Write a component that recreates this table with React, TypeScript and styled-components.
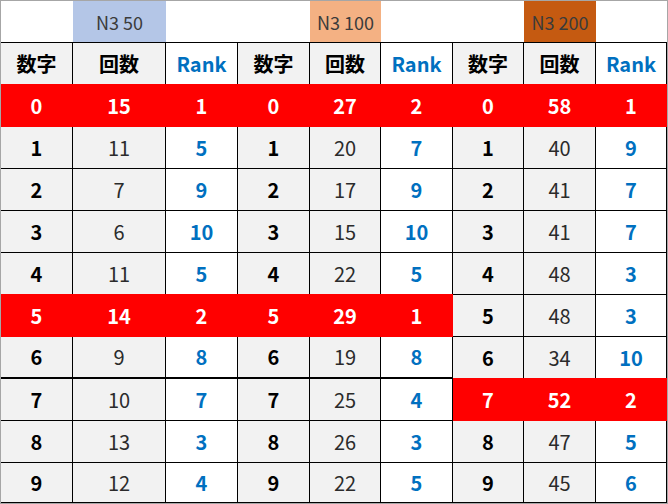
import React from "react";
import styled, { createGlobalStyle, css } from "styled-components";

type Kind = "num" | "count" | "rank";

type Group = {
  title: string;
  tint: string;
  counts: number[];
  ranks: number[];
  hot: number[];
};

const groups: Group[] = [
  {
    title: "N3 50",
    tint: "#b4c6e7",
    counts: [15, 11, 7, 6, 11, 14, 9, 10, 13, 12],
    ranks: [1, 5, 9, 10, 5, 2, 8, 7, 3, 4],
    hot: [0, 5],
  },
  {
    title: "N3 100",
    tint: "#f4b183",
    counts: [27, 20, 17, 15, 22, 29, 19, 25, 26, 22],
    ranks: [2, 7, 9, 10, 5, 1, 8, 4, 3, 5],
    hot: [0, 5],
  },
  {
    title: "N3 200",
    tint: "#c55a11",
    counts: [58, 40, 41, 41, 48, 48, 34, 52, 47, 45],
    ranks: [1, 9, 7, 7, 3, 3, 10, 2, 5, 6],
    hot: [0, 7],
  },
];

const COLUMNS = "72px 93px 72px 72px 71px 72px 71px 72px 71px";

const GlobalStyle = createGlobalStyle`
  body {
    margin: 0;
    background: #fff;
    font-family: "Noto Sans CJK JP", "Noto Sans", sans-serif;
  }
`;

const Frame = styled.div`
  display: flex;
  flex-direction: column;
  width: 668px;
  height: 504px;
  box-sizing: border-box;
  border: 1px solid #a6a6a6;
  overflow: hidden;
`;

const TitleRow = styled.div`
  display: grid;
  grid-template-columns: ${COLUMNS};
  height: 41px;
`;

const TitleCell = styled.div<{ $tint?: string }>`
  display: flex;
  align-items: center;
  justify-content: center;
  padding-top: 1px;
  background: ${(p) => p.$tint || "transparent"};
  color: #3b3b3b;
  font-size: 18px;
  line-height: 1;
`;

const Table = styled.div`
  display: grid;
  grid-template-columns: ${COLUMNS};
  grid-template-rows: repeat(10, 42px) 40px;
  border-top: 1px solid #000;
`;

const Cell = styled.div<{ $kind: Kind; $hot?: boolean; $thick?: boolean }>`
  display: flex;
  align-items: center;
  justify-content: center;
  box-sizing: border-box;
  border-right: 1px solid #000;
  border-bottom: ${(p) => (p.$thick ? 2 : 1)}px solid #000;
  font-size: 20px;
  line-height: 1;
  font-weight: ${(p) => (p.$kind === "count" ? 400 : 700)};
  background: ${(p) => (p.$kind === "rank" ? "#fff" : "#f2f2f2")};
  color: ${(p) =>
    p.$kind === "rank" ? "#0070c0" : p.$kind === "count" ? "#2b2b2b" : "#000"};

  ${(p) =>
    p.$hot &&
    css`
      background: #ff0000;
      color: #fff;
      font-weight: 700;
      border-color: #ff0000;
      box-shadow: 0 -1px 0 #ff0000;
    `}
`;

const HeadCell = styled(Cell)`
  color: ${(p) => (p.$kind === "rank" ? "#0070c0" : "#000")};
  font-weight: 700;
`;

const App = () => {
  const rows = Array.from({ length: 10 }, (_, i) => i);

  return (
    <>
      <GlobalStyle />
      <Frame>
        <TitleRow>
          {groups.map((g) => (
            <React.Fragment key={g.title}>
              <TitleCell />
              <TitleCell $tint={g.tint}>{g.title}</TitleCell>
              <TitleCell />
            </React.Fragment>
          ))}
        </TitleRow>
        <Table>
          {groups.map((g) => (
            <React.Fragment key={g.title}>
              <HeadCell $kind="num">数字</HeadCell>
              <HeadCell $kind="count">回数</HeadCell>
              <HeadCell $kind="rank">Rank</HeadCell>
            </React.Fragment>
          ))}
          {rows.map((i) =>
            groups.map((g, gi) => {
              const hot = g.hot.includes(i);
              // heavy rule under row 6 in the first two groups
              const thick = i === 6 && gi < 2;
              return (
                <React.Fragment key={`${g.title}-${i}`}>
                  <Cell $kind="num" $hot={hot} $thick={thick}>
                    {i}
                  </Cell>
                  <Cell $kind="count" $hot={hot} $thick={thick}>
                    {g.counts[i]}
                  </Cell>
                  <Cell $kind="rank" $hot={hot} $thick={thick}>
                    {g.ranks[i]}
                  </Cell>
                </React.Fragment>
              );
            }),
          )}
        </Table>
      </Frame>
    </>
  );
};

export default App;
